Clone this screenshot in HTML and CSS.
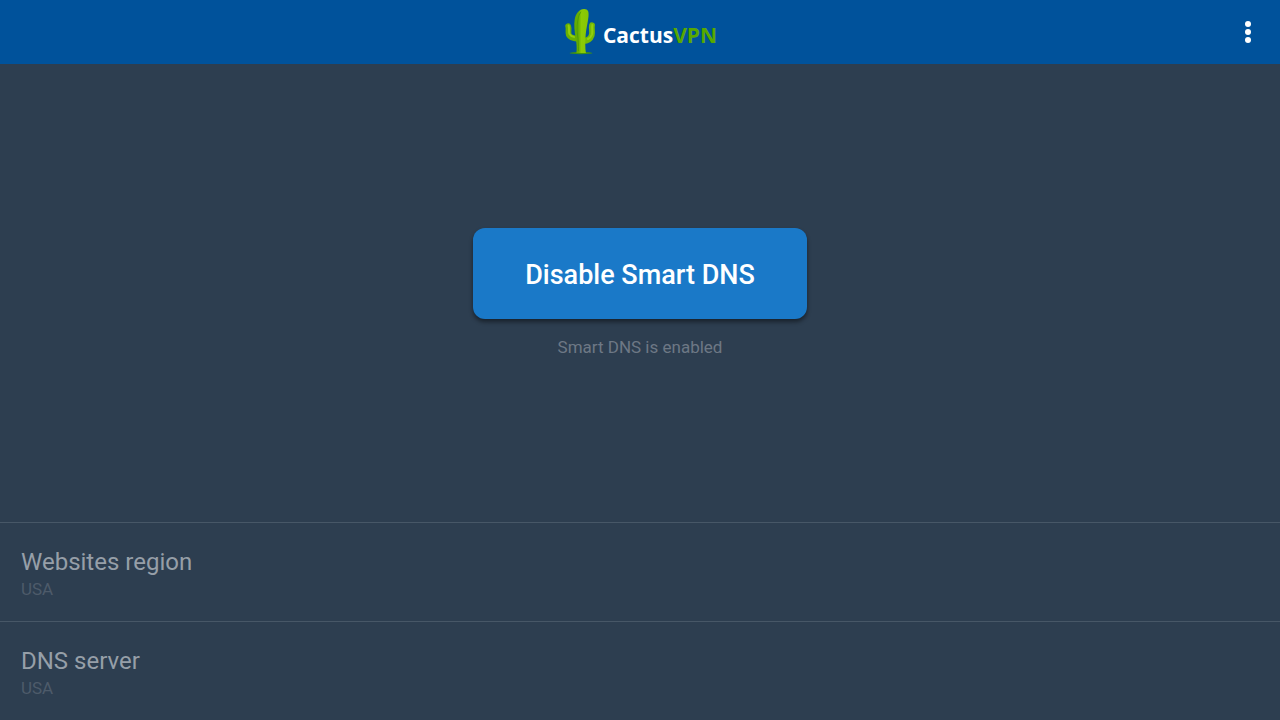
FILE: index.html
```html
<!DOCTYPE html>
<html lang="en">
<head>
  <meta charset="UTF-8">
  <meta name="viewport" content="width=device-width, initial-scale=1">
  <title>CactusVPN</title>
  <link rel="stylesheet" href="styles.css">
</head>
<body>
  <header class="topbar">
    <a href="#" class="logo">
      <svg class="logo-icon" viewBox="-1 0 33 46" aria-hidden="true">
        <defs>
          <linearGradient id="trunk" x1="0" x2="1" y1="0" y2="0">
            <stop offset="0" stop-color="#62aa02"/>
            <stop offset="0.3" stop-color="#68b002"/>
            <stop offset="0.5" stop-color="#8ccb06"/>
            <stop offset="1" stop-color="#86c605"/>
          </linearGradient>
        </defs>
        <ellipse cx="17" cy="44" rx="11.500" ry="1.200" fill="#3f9212"/>
        <g fill="none" stroke-linecap="round" stroke-linejoin="round">
          <path d="M4.200 17.300c1 2.500-.4 6 .6 8.500 1.200 2.600 4.500 3.700 9.200 4" stroke="#68b002" stroke-width="5.800"/>
          <path d="M28 16.300c-.8 3 .8 6.500-.3 10-1.200 3.500-4.200 5.700-8.700 5.900" stroke="#74ba04" stroke-width="5.800"/>
          <path d="M4.600 16.600c1 3-.2 6 .9 8.300 1 1.700 2.500 2.500 4.500 3" stroke="#92cf0c" stroke-width="2"/>
          <path d="M28.300 16c-.6 3 .6 6.500-.3 9.500-.8 2.200-2 3.500-4 4.500" stroke="#92cf0c" stroke-width="2"/>
        </g>
        <path d="M12.400 44c.7-5 .1-10-.7-15-1.200-6-2-13-1-18.500C11.700 4.500 15.400.2 20 .1c4.200-.1 5 2.900 4.500 7.400-.6 6-2.300 12-2.800 18-.5 7-.7 13 .2 18.500z" fill="url(#trunk)"/>
        <path d="M14.400 42c.2-6-.3-11-.9-16-.8-7-.4-13 1-18 .6-2.200 1.500-4 2.600-5.200" fill="none" stroke="#529f04" stroke-width="1"/>
      </svg>
      <span class="logo-text">Cactus<span class="logo-accent">VPN</span></span>
    </a>
    <button type="button" class="menu-button" aria-label="More options">
      <svg viewBox="0 0 24 24" fill="currentColor" aria-hidden="true">
        <circle cx="12" cy="4" r="3"/>
        <circle cx="12" cy="12" r="3"/>
        <circle cx="12" cy="20" r="3"/>
      </svg>
    </button>
  </header>

  <main class="main">
    <button type="button" class="dns-button">Disable Smart DNS</button>
    <p class="status">Smart DNS is enabled</p>
  </main>

  <section class="settings">
    <button type="button" class="setting">
      <span class="setting-title">Websites region</span>
      <span class="setting-value">USA</span>
    </button>
    <button type="button" class="setting">
      <span class="setting-title">DNS server</span>
      <span class="setting-value">USA</span>
    </button>
  </section>
</body>
</html>
```

FILE: styles.css
```css
:root {
  --bar: #00529b;
  --background: #2d3e50;
  --primary: #1a79c8;
  --divider: #475767;
  --text: #969fa8;
  --text-light: #6d7885;
  --text-faint: #4d5b6a;
}

* {
  box-sizing: border-box;
}

body {
  display: flex;
  flex-direction: column;
  min-height: 100vh;
  margin: 0;
  background-color: var(--background);
  color: var(--text);
  font-family: Roboto, "Liberation Sans", sans-serif;
}

button {
  margin: 0;
  border: none;
  background: none;
  color: inherit;
  font-family: inherit;
  cursor: pointer;
}

.topbar {
  display: grid;
  grid-template-columns: 1fr auto 1fr;
  align-items: center;
  height: 64px;
  padding: 0 20px;
  background-color: var(--bar);
}

.logo {
  display: flex;
  grid-column: 2;
  align-items: center;
  gap: 7px;
  text-decoration: none;
}

.logo-icon {
  width: 33px;
  height: 46px;
}

.logo-text {
  padding-top: 6px;
  color: #ffffff;
  font-family: "Open Sans", "Noto Sans", sans-serif;
  font-size: 21px;
  font-weight: 700;
  line-height: 28px;
}

.logo-accent {
  color: #58a800;
}

.menu-button {
  justify-self: end;
  padding: 8px 0;
  color: #ffffff;
}

.menu-button svg {
  display: block;
  width: 24px;
  height: 24px;
}

.main {
  display: flex;
  flex: 1;
  flex-direction: column;
  align-items: center;
  justify-content: center;
  gap: 16px;
}

.dns-button {
  padding: 32px 52px 28px;
  border-radius: 12px;
  background-color: var(--primary);
  box-shadow: 0 3px 4px rgba(0, 0, 0, 0.45);
  color: #ffffff;
  font-size: 27px;
  font-weight: 500;
  line-height: 31px;
}

.status {
  margin: 0;
  color: var(--text-light);
  font-size: 17px;
  line-height: 24px;
}

.setting {
  display: block;
  width: 100%;
  padding: 25px 21px 20px;
  border-top: 1px solid var(--divider);
  text-align: left;
}

.setting-title,
.setting-value {
  display: block;
}

.setting-title {
  font-size: 24px;
  line-height: 29px;
}

.setting-value {
  color: var(--text-faint);
  font-size: 17px;
  line-height: 24px;
}
```
